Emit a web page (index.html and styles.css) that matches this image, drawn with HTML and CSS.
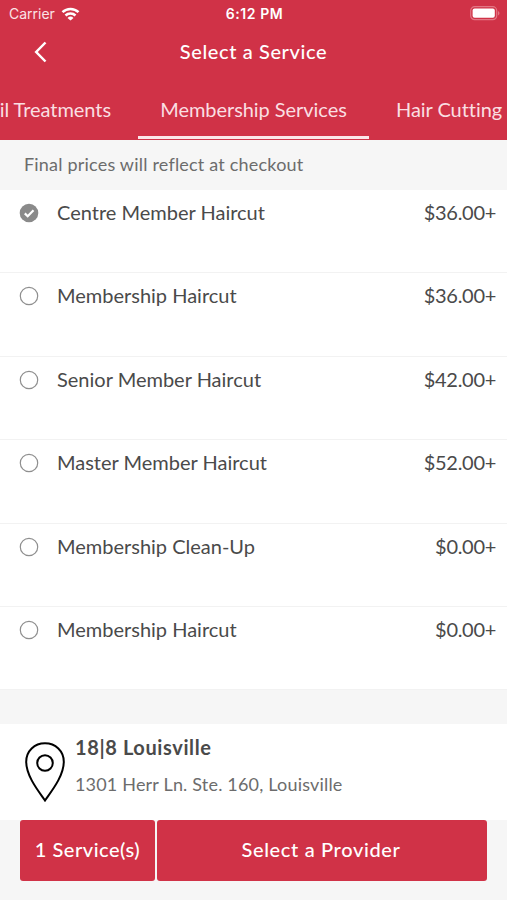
FILE: index.html
```html
<!DOCTYPE html>
<html lang="en">
  <head>
    <meta charset="UTF-8" />
    <meta name="viewport" content="width=device-width, initial-scale=1.0" />
    <title>Select a Service</title>
    <link rel="stylesheet" href="styles.css">
  </head>
  <body>
    <header>
      <div class="status-bar">
        <div class="carrier">
          <span>Carrier</span>
          <svg width="19" height="14" viewBox="0 0 18 14" fill="none" stroke="#fff" stroke-width="2.5">
            <path d="M1 5.2a11.4 11.4 0 0 1 16 0" />
            <path d="M4 8.5a7.2 7.2 0 0 1 10 0" />
            <path d="M9 13.5L6 10.9a4.4 4.4 0 0 1 6 0z" fill="#fff" stroke="none" />
          </svg>
        </div>
        <span class="time">6:12 PM</span>
        <svg class="battery" width="31" height="15" viewBox="0 0 31 15">
          <rect x="1.7" y="0.7" width="26" height="13" rx="4" fill="none" stroke="#e27684" stroke-width="1.2" />
          <rect x="3.6" y="2.6" width="22.2" height="9.2" rx="2" fill="#fff" />
          <path d="M29 5v4.4c2-.8 2-3.6 0-4.4z" fill="#e27684" />
        </svg>
      </div>
      <div class="title-bar">
        <svg class="back" width="14" height="22" viewBox="0 0 14 22" fill="none" stroke="#fff" stroke-width="2.5">
          <path d="M11.5 1.5L2.2 11l9.3 9.5" />
        </svg>
        <h1>Select a Service</h1>
      </div>
      <nav>
        <ul>
          <li class="tab tab-left">Nail Treatments</li>
          <li class="tab active">Membership Services</li>
          <li class="tab tab-right">Hair Cutting</li>
        </ul>
      </nav>
    </header>

    <p class="notice">Final prices will reflect at checkout</p>

    <ul class="services">
      <li class="service">
        <svg class="radio" width="20" height="20" viewBox="0 0 20 20">
          <circle cx="10" cy="10" r="9.3" fill="#8a8a8a" />
          <path d="M5.8 10.4l2.9 2.9 5.8-6" fill="none" stroke="#fff" stroke-width="2.2" />
        </svg>
        <span class="name">Centre Member Haircut</span>
        <span class="price">$36.00+</span>
      </li>
      <li class="service">
        <svg class="radio" width="20" height="20" viewBox="0 0 20 20"><circle cx="10" cy="10" r="8.7" fill="none" stroke="#8f8f8f" stroke-width="1.2" /></svg>
        <span class="name">Membership Haircut</span>
        <span class="price">$36.00+</span>
      </li>
      <li class="service">
        <svg class="radio" width="20" height="20" viewBox="0 0 20 20"><circle cx="10" cy="10" r="8.7" fill="none" stroke="#8f8f8f" stroke-width="1.2" /></svg>
        <span class="name">Senior Member Haircut</span>
        <span class="price">$42.00+</span>
      </li>
      <li class="service">
        <svg class="radio" width="20" height="20" viewBox="0 0 20 20"><circle cx="10" cy="10" r="8.7" fill="none" stroke="#8f8f8f" stroke-width="1.2" /></svg>
        <span class="name">Master Member Haircut</span>
        <span class="price">$52.00+</span>
      </li>
      <li class="service">
        <svg class="radio" width="20" height="20" viewBox="0 0 20 20"><circle cx="10" cy="10" r="8.7" fill="none" stroke="#8f8f8f" stroke-width="1.2" /></svg>
        <span class="name">Membership Clean-Up</span>
        <span class="price">$0.00+</span>
      </li>
      <li class="service">
        <svg class="radio" width="20" height="20" viewBox="0 0 20 20"><circle cx="10" cy="10" r="8.7" fill="none" stroke="#8f8f8f" stroke-width="1.2" /></svg>
        <span class="name">Membership Haircut</span>
        <span class="price">$0.00+</span>
      </li>
    </ul>

    <section class="location">
      <svg class="pin" width="40" height="60" viewBox="0 0 40 60" fill="none" stroke="#000" stroke-width="2">
        <path d="M20 58.5C15.5 51.5 1.2 35 1.2 19.8C1.2 9 9.5 1.3 20 1.3S38.8 9 38.8 19.8C38.8 35 24.5 51.5 20 58.5z" />
        <circle cx="20" cy="21" r="7.8" />
      </svg>
      <div class="address">
        <h2>18|8 Louisville</h2>
        <p>1301 Herr Ln. Ste. 160, Louisville</p>
      </div>
    </section>

    <footer>
      <button class="count">1 Service(s)</button>
      <button class="provider">Select a Provider</button>
    </footer>
  </body>
</html>
```

FILE: styles.css
```css
* {
  margin: 0;
  padding: 0;
  box-sizing: border-box;
}

body {
  height: 900px;
  font-family: Lato, sans-serif;
  font-size: 20px;
  background-color: #f6f6f6;
  color: #4a4a4a;
  overflow: hidden;
}

ul {
  list-style: none;
}

header {
  height: 140px;
  background-color: #d03247;
  color: #fff;
}

.status-bar {
  display: grid;
  grid-template-columns: 1fr auto 1fr;
  align-items: center;
  height: 27px;
  padding: 0 7px 0 9px;
  font-family: Inter, sans-serif;
  font-size: 14px;
}

.carrier {
  display: flex;
  align-items: center;
  gap: 6px;
  color: #fbe3e6;
}

.time {
  font-weight: 600;
  letter-spacing: 0.6px;
}

.battery {
  justify-self: end;
}

.title-bar {
  display: grid;
  grid-template-columns: 80px 1fr 80px;
  align-items: center;
  height: 50px;
}

.back {
  margin-left: 34px;
}

h1 {
  margin-top: -2px;
  font-size: 20px;
  font-weight: 500;
  letter-spacing: 0.6px;
  text-align: center;
}

nav {
  overflow: hidden;
}

nav ul {
  display: flex;
  justify-content: center;
  height: 62px;
}

.tab {
  flex: none;
  width: 231px;
  height: 62px;
  line-height: 64px;
  letter-spacing: -0.05px;
  color: #fadfe2;
  white-space: nowrap;
  text-align: center;
}

.tab-left {
  padding-right: 27px;
  text-align: right;
}

.tab-right {
  padding-left: 27px;
  text-align: left;
}

.active {
  border-bottom: 3px solid #fbe6e9;
}

.notice {
  height: 50px;
  padding-left: 24px;
  line-height: 48px;
  font-size: 18px;
  letter-spacing: 0.2px;
  color: #6c6c6c;
}

.services {
  background-color: #fff;
}

.service {
  display: flex;
  align-items: flex-start;
  height: 83.4px;
  padding: 13px 11px 0 19px;
  border-bottom: 1px solid #f2f2f2;
  line-height: 18px;
}

.name {
  flex: 1;
  margin-left: 18px;
}

.price {
  letter-spacing: -0.3px;
}

.location {
  display: flex;
  height: 96px;
  margin-top: 34px;
  padding: 18px 25px 0;
  background-color: #fff;
}

.address {
  margin: -7px 0 0 10px;
}

h2 {
  line-height: 24px;
  font-size: 20px;
  font-weight: 700;
  letter-spacing: 0.6px;
}

.address p {
  margin-top: 14px;
  line-height: 22px;
  font-size: 18px;
  letter-spacing: 0.18px;
  color: #6c6c6c;
}

footer {
  display: flex;
  gap: 2px;
  padding: 0 20px;
}

button {
  height: 61px;
  padding-bottom: 4px;
  border: none;
  border-radius: 3px;
  background-color: #d03247;
  color: #fff;
  font-family: inherit;
  font-size: 20px;
  font-weight: 500;
  letter-spacing: 0.5px;
}

.count {
  width: 135px;
}

.provider {
  flex: 1;
  padding-right: 2px;
  letter-spacing: 0.65px;
}
```
